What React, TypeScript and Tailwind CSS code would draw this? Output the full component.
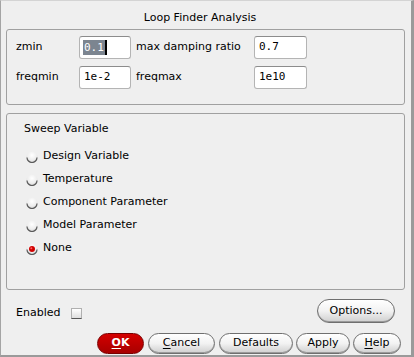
import React from "react";

const sans = { fontFamily: '"DejaVu Sans", Verdana, sans-serif' };
const mono = { fontFamily: '"DejaVu Sans Mono", "Liberation Mono", monospace' };

function Field({ value, selected, w }: { value: string; selected?: boolean; w: number }) {
  return (
    <div
      className="h-[23px] bg-white border border-[#b4b4b4] border-t-[#8c8c8c] rounded-[3px] flex items-center pl-[3px] text-[11px] text-black"
      style={{ ...mono, width: w }}
    >
      {selected ? (
        <>
          <span className="bg-[#7c8590] text-white leading-[15px] px-[1px]">{value}</span>
          <span className="w-[2px] h-[15px] bg-black" />
        </>
      ) : (
        <span className="pl-[1px]">{value}</span>
      )}
    </div>
  );
}

function Radio({ on }: { on?: boolean }) {
  return (
    <svg width="12" height="12" viewBox="0 0 12 12">
      <defs>
        <radialGradient id={on ? "rgOn" : "rgOff"} cx="0.5" cy="0.35" r="0.65">
          <stop offset="0" stopColor="#ffffff" />
          <stop offset="0.7" stopColor="#ececec" />
          <stop offset="1" stopColor="#c8c8c8" />
        </radialGradient>
      </defs>
      <circle cx="6" cy="6" r="5.5" fill={`url(#${on ? "rgOn" : "rgOff"})`} />
      <path d="M1 6.5 A5 5 0 0 0 11 6.5" fill="none" stroke="#5a5a5a" strokeWidth="1.2" />
      {on && <circle cx="6" cy="6" r="3" fill="#d00000" />}
      {on && <circle cx="5.3" cy="5.2" r="1" fill="#ff6060" />}
    </svg>
  );
}

function Btn({
  w,
  children,
  red,
  ml,
}: {
  w: number;
  children: React.ReactNode;
  red?: boolean;
  ml?: number;
}) {
  return (
    <div
      className={
        red
          ? "h-[21px] rounded-full border border-[#7a0000] bg-gradient-to-b from-[#d40000] to-[#a80000] text-white font-bold flex items-center justify-center text-[11px]"
          : "h-[21px] rounded-full border border-[#6f6f6f] bg-gradient-to-b from-[#ffffff] via-[#f2f2f2] to-[#cfcfcf] text-black flex items-center justify-center text-[11px] shadow-[inset_0_-1px_0_#9a9a9a]"
      }
      style={{ width: w, marginLeft: ml ?? 0 }}
    >
      {children}
    </div>
  );
}

export default function App() {
  return (
    <div
      className="w-[414px] h-[357px] bg-[#efefef] border-l border-l-[#a4a4a4] border-t border-t-[#d4d4d4] border-r-[3px] border-r-[#9a9a9a] border-b-2 border-b-[#9a9a9a] flex flex-col text-[11px] text-black"
      style={sans}
    >
      <div className="h-[28px] pt-[10px] leading-[14px] text-center pr-[12px]">Loop Finder Analysis</div>

      <div className="ml-[5px] mr-[6px] h-[76px] border border-[#a0a0a0] rounded-[3px] pt-[6px] pl-[9px]">
        <div className="flex items-center h-[23px]">
          <div className="w-[63px]">zmin</div>
          <Field value="0.1" selected w={52} />
          <div className="w-[123px] pl-[5px]">max damping ratio</div>
          <Field value="0.7" w={53} />
        </div>
        <div className="flex items-center h-[23px] mt-[7px]">
          <div className="w-[63px]">freqmin</div>
          <Field value="1e-2" w={52} />
          <div className="w-[123px] pl-[5px]">freqmax</div>
          <Field value="1e10" w={53} />
        </div>
      </div>

      <div className="ml-[5px] mr-[6px] mt-[8px] h-[177px] border border-[#a0a0a0] rounded-[3px] pt-[8px]">
        <div className="pl-[17px] leading-[14px] h-[14px]">Sweep Variable</div>
        <div className="mt-[9px] pl-[19px] flex flex-col">
          {["Design Variable", "Temperature", "Component Parameter", "Model Parameter", "None"].map((t, i) => (
            <div key={t} className="h-[23px] flex items-center gap-[5px]">
              <Radio on={i === 4} />
              <span>{t}</span>
            </div>
          ))}
        </div>
      </div>

      <div className="flex items-start h-[43px]">
        <div className="flex items-center mt-[16px] ml-[15px] h-[14px]">
          <span className="w-[55px]">Enabled</span>
          <div className="w-[11px] h-[11px] border border-[#b0b0b0] border-b-[#555] bg-gradient-to-b from-white to-[#dedede]" />
        </div>
        <div className="ml-auto mr-[16px] mt-[9px]">
          <div className="h-[24px] w-[78px] rounded-full border border-[#6f6f6f] bg-gradient-to-b from-[#ffffff] via-[#f2f2f2] to-[#cfcfcf] flex items-center justify-center shadow-[inset_0_-1px_0_#9a9a9a]">
            Options...
          </div>
        </div>
      </div>

      <div className="flex items-center mt-[0px] pl-[96px]">
        <Btn w={47} red>
          <span className="underline underline-offset-2">O</span>K
        </Btn>
        <Btn w={67} ml={4}>
          <span className="underline underline-offset-2">C</span>ancel
        </Btn>
        <Btn w={74} ml={4}>Defaults</Btn>
        <Btn w={54} ml={3}>Apply</Btn>
        <Btn w={48} ml={3}>
          <span className="underline underline-offset-2">H</span>elp
        </Btn>
      </div>
    </div>
  );
}
